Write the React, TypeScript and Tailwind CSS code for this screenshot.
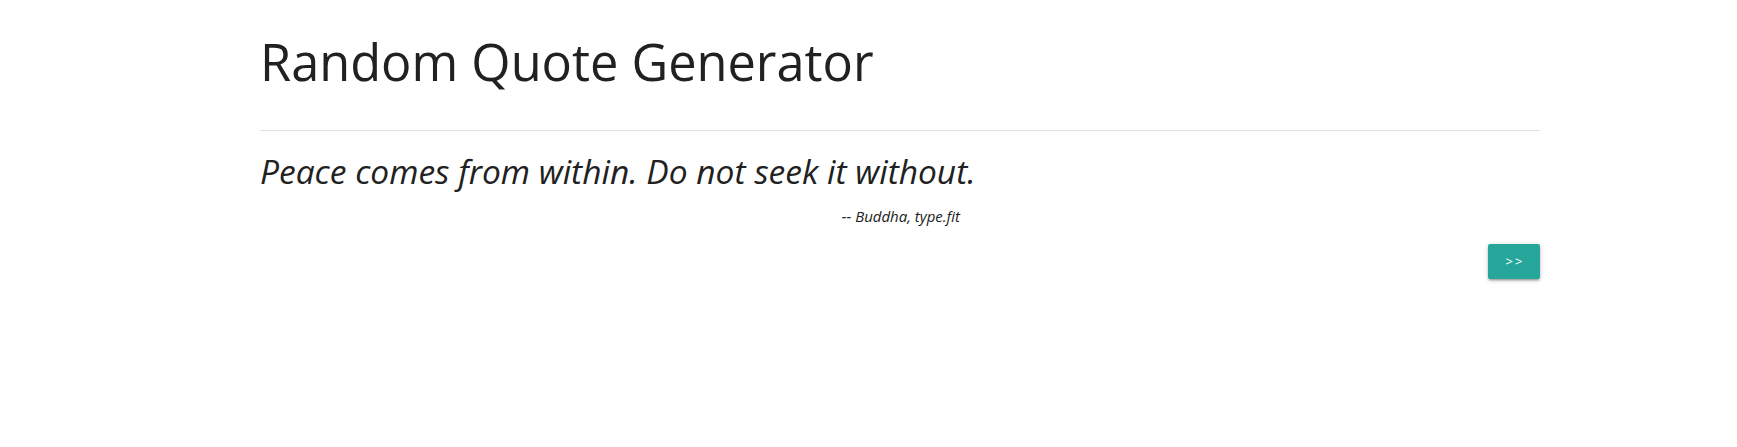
export default function App() {
  return (
    <div className="min-h-screen bg-white pt-[32px] text-[#212121] [font-family:'Open_Sans',sans-serif]">
      <div className="ml-[260px] w-[1280px]">
        <h1 className="text-[50.5px] leading-[60px] font-normal">Random Quote Generator</h1>
        <hr className="mt-[38px] border-0 border-t border-[#e0e0e0]" />
        <blockquote className="w-[716px]">
          <p className="mt-[20px] text-[33.5px] leading-[40px] italic">Peace comes from within. Do not seek it without.</p>
          <p className="mt-[15px] text-right pr-[16px] text-[15px] leading-[21px] italic">-- Buddha, type.fit</p>
        </blockquote>
        <div className="mt-[17px] flex justify-end">
          <button className="h-[35px] w-[52px] rounded-[2px] bg-[#26a69a] pl-[2px] text-[13px] tracking-[2px] text-white shadow-[0_2px_2px_0_rgba(0,0,0,0.14),0_3px_1px_-2px_rgba(0,0,0,0.12),0_1px_5px_0_rgba(0,0,0,0.2)]">
            &gt;&gt;
          </button>
        </div>
      </div>
    </div>
  );
}
